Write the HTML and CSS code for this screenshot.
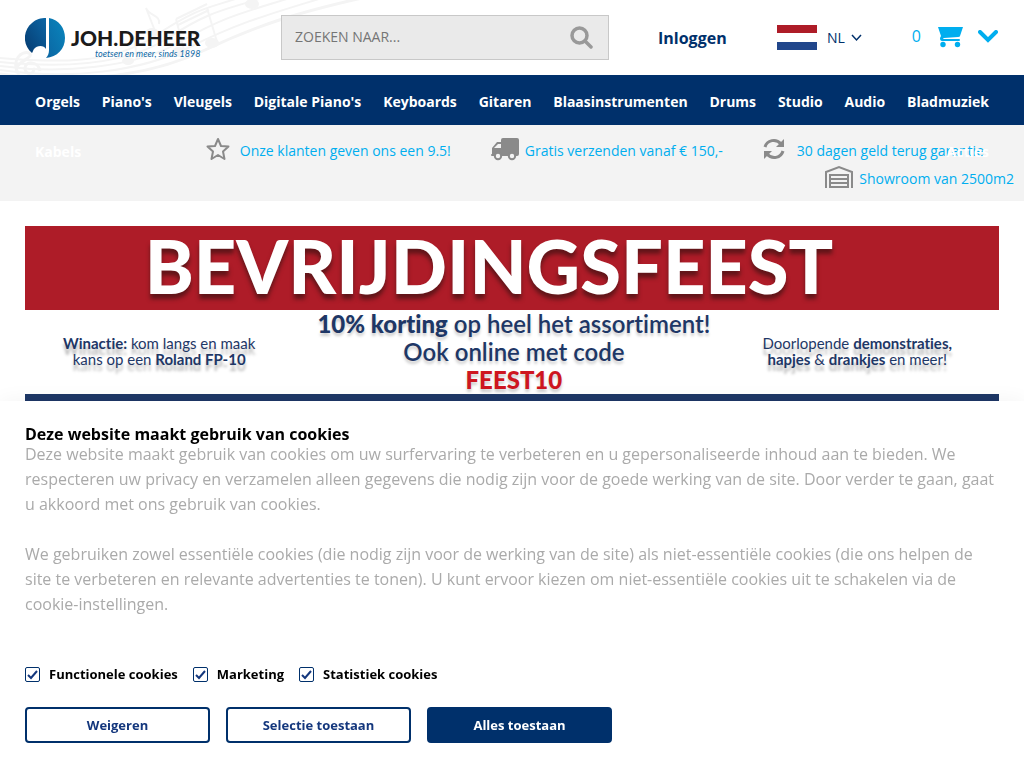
FILE: index.html
```html
<!DOCTYPE html>
<html lang="nl">
<head>
  <meta charset="UTF-8">
  <meta name="viewport" content="width=device-width, initial-scale=1.0">
  <title>Joh.deHeer - toetsen en meer, sinds 1898</title>
  <link rel="stylesheet" href="styles.css">
</head>
<body>
  <header class="header">
    <svg class="header-notes" width="380" height="75" viewBox="0 0 380 75" fill="none" stroke="#f4f4f4" stroke-width="2" aria-hidden="true">
      <path d="M0 58C50 62 110 66 155 36S210 8 238 -2"/>
      <path d="M0 62C60 68 125 66 168 38S225 10 262 -2"/>
      <path d="M0 66C60 74 135 68 180 42S245 12 290 -2"/>
      <path d="M0 70C70 80 140 72 190 47S270 14 322 -2"/>
      <path d="M0 74C80 84 150 76 205 50S300 12 362 -2" stroke-width="3"/>
      <path d="M19 75C10 60 22 50 29 53C36 58 12 62 17 73M40 71C38 60 24 61 25 69C26 76 36 74 33 68" stroke-width="3"/>
      <path d="M146 8L155 31M146 8C149 16 161 15 159 24M176 19L184 50M207 8L217 42M176 19L207 4M178 25L209 10M134 36L137 60" stroke-width="2"/>
      <g fill="#f4f4f4" stroke="none">
        <ellipse cx="152" cy="32" rx="6" ry="4"/>
        <ellipse cx="179" cy="52" rx="7" ry="5"/>
        <ellipse cx="212" cy="43" rx="7" ry="5"/>
        <ellipse cx="128" cy="61" rx="6" ry="4"/>
        <ellipse cx="252" cy="4" rx="7" ry="5"/>
      </g>
    </svg>

    <a class="logo" href="#">
      <svg width="40" height="40" viewBox="0 0 40 40" aria-hidden="true">
        <defs>
          <linearGradient id="logoLeft" x1="1" y1="0" x2="0" y2="1">
            <stop offset="0" stop-color="#0b66a5"/>
            <stop offset="1" stop-color="#063b70"/>
          </linearGradient>
          <linearGradient id="logoRight" x1="0" y1="1" x2="1" y2="0">
            <stop offset="0" stop-color="#0b65a2"/>
            <stop offset="1" stop-color="#0a86bd"/>
          </linearGradient>
        </defs>
        <path fill="url(#logoLeft)" d="M21 0V31C19 27 12 27 9 31C8 32 8 34 7 35C-3 27 -2 12 7 5C11 1 16 0 21 0Z"/>
        <path fill="url(#logoRight)" d="M24 0C34 2 40 10 40 20C40 31 32 39 21 40C23 38 24 35 24 32Z"/>
      </svg>
      <span class="logo-text">
        <span class="logo-name">JOH.DEHEER</span>
        <span class="logo-tagline">toetsen en meer, sinds 1898</span>
      </span>
    </a>

    <form class="search">
      <input class="search-input" type="text" placeholder="ZOEKEN NAAR..." aria-label="Zoeken naar">
      <button class="search-button" type="button" aria-label="Zoeken">
        <svg width="23" height="23" viewBox="0 0 23 23" fill="none" stroke="#999" aria-hidden="true">
          <circle cx="9.500" cy="9.500" r="7.500" stroke-width="3.500"/>
          <path d="M15 15L21 21" stroke-width="3.500" stroke-linecap="round"/>
        </svg>
      </button>
    </form>

    <a class="login" href="#">Inloggen</a>

    <button class="language" type="button">
      <svg width="40" height="25" viewBox="0 0 40 25" aria-hidden="true">
        <path fill="#fff" d="M0 0H40V25H0Z"/>
        <path fill="#ae1c28" d="M0 0H40V8H0Z"/>
        <path fill="#21468b" d="M0 17H40V25H0Z"/>
      </svg>
      <span class="language-name">NL</span>
      <svg width="11" height="8" viewBox="0 0 11 8" fill="none" stroke="#00306b" stroke-width="1.500" aria-hidden="true">
        <path d="M1 1L5.500 6L10 1"/>
      </svg>
    </button>

    <a class="cart" href="#">
      <span>0</span>
      <svg class="cart-icon" width="25" height="22" viewBox="0 0 25 22" aria-hidden="true">
        <path fill="#00aeef" d="M0 1H25L22 10Q22 11 20 11L6 12Q4 13 6 13H21Q22 13 22 14Q22 15 21 15H4Q2 15 2 12L3 10Z"/>
        <circle cx="5" cy="18.500" r="2.700" fill="#00aeef"/>
        <circle cx="19.500" cy="18.500" r="2.700" fill="#00aeef"/>
      </svg>
      <svg width="20" height="13" viewBox="0 0 20 13" fill="none" stroke="#00aeef" stroke-width="4" stroke-linecap="round" aria-hidden="true">
        <path d="M2 2L10 10L18 2"/>
      </svg>
    </a>
  </header>

  <nav class="nav">
    <ul class="nav-list">
      <li><a href="#">Orgels</a></li>
      <li><a href="#">Piano's</a></li>
      <li><a href="#">Vleugels</a></li>
      <li><a href="#">Digitale Piano's</a></li>
      <li><a href="#">Keyboards</a></li>
      <li><a href="#">Gitaren</a></li>
      <li><a href="#">Blaasinstrumenten</a></li>
      <li><a href="#">Drums</a></li>
      <li><a href="#">Studio</a></li>
      <li><a href="#">Audio</a></li>
      <li><a href="#">Bladmuziek</a></li>
      <li><a href="#">Kabels</a></li>
      <li><a href="#">Acties</a></li>
    </ul>
  </nav>

  <ul class="usp">
    <li>
      <svg width="24" height="24" viewBox="0 0 24 24" fill="none" stroke="#8a8a8a" stroke-width="2" stroke-linejoin="round" aria-hidden="true">
        <path d="M12 2L15 9L22.500 9.500L17 14.500L18.500 22L12 18L5.500 22L7 14.500L1.500 9.500L9 9Z"/>
      </svg>
      <a class="usp-wide" href="#">Onze klanten geven ons een 9.5!</a>
    </li>
    <li>
      <svg width="28" height="24" viewBox="0 0 28 24" aria-hidden="true">
        <path fill="#8a8a8a" d="M12 1H26Q28 1 28 3V17Q28 19 26 19H1Q0 19 0 18Q0 17 1 17V11L6 5H10V3Q10 1 12 1Z"/>
        <path fill="#f3f3f3" d="M7 7H10V11H3Z"/>
        <g fill="#f3f3f3" stroke="#8a8a8a" stroke-width="2">
          <circle cx="7" cy="19" r="3.200"/>
          <circle cx="21" cy="19" r="3.200"/>
        </g>
      </svg>
      <a href="#">Gratis verzenden vanaf € 150,-</a>
    </li>
    <li>
      <svg width="22" height="22" viewBox="0 0 22 22" fill="none" stroke="#8a8a8a" stroke-width="3" aria-hidden="true">
        <path d="M2 9C4 2 13 0 18 6M20 13C18 20 9 22 4 16"/>
        <path fill="#8a8a8a" stroke="none" d="M21 1V9H13ZM1 21V13H9Z"/>
      </svg>
      <a class="usp-wider" href="#">30 dagen geld terug garantie</a>
    </li>
    <li>
      <svg width="28" height="24" viewBox="0 0 28 24" fill="none" stroke="#8a8a8a" stroke-width="2" aria-hidden="true">
        <path d="M1 23V7L14 2L27 7V23"/>
        <path d="M5 22V10H23V22ZM5 14H23M5 18H23"/>
      </svg>
      <a href="#">Showroom van 2500m2</a>
    </li>
  </ul>

  <main class="content">
    <section class="banner">
      <h1 class="banner-title">BEVRIJDINGSFEEST</h1>
      <div class="banner-body">
        <p class="banner-side"><b>Winactie:</b> kom langs en maak<br>kans op een <b>Roland FP-10</b></p>
        <p class="banner-offer"><b>10% korting</b> op heel het assortiment!<br>Ook online met code<br><b class="banner-code">FEEST10</b></p>
        <p class="banner-side">Doorlopende <b>demonstraties,</b><br><b>hapjes</b> &amp; <b>drankjes</b> en meer!</p>
      </div>
    </section>
  </main>

  <form class="cookies">
    <h2>Deze website maakt gebruik van cookies</h2>
    <p>Deze website maakt gebruik van cookies om uw surfervaring te verbeteren en u gepersonaliseerde inhoud aan te bieden. We respecteren uw privacy en verzamelen alleen gegevens die nodig zijn voor de goede werking van de site. Door verder te gaan, gaat u akkoord met ons gebruik van cookies.</p>
    <p>We gebruiken zowel essentiële cookies (die nodig zijn voor de werking van de site) als niet-essentiële cookies (die ons helpen de site te verbeteren en relevante advertenties te tonen). U kunt ervoor kiezen om niet-essentiële cookies uit te schakelen via de cookie-instellingen.</p>
    <div class="cookie-options">
      <label><input type="checkbox" id="functional" checked> Functionele cookies</label>
      <label><input type="checkbox" id="marketing" checked> Marketing</label>
      <label><input type="checkbox" id="statistics" checked> Statistiek cookies</label>
    </div>
    <div class="cookie-buttons">
      <button type="button">Weigeren</button>
      <button type="button">Selectie toestaan</button>
      <button type="button" class="primary">Alles toestaan</button>
    </div>
  </form>
</body>
</html>
```
FILE: styles.css
```css
* {
  box-sizing: border-box;
}

body {
  margin: 0;
  font-family: "Open Sans", Arial, sans-serif;
  font-size: 14px;
  color: #000;
  background-color: #fff;
}

a {
  text-decoration: none;
}

button {
  font-family: inherit;
  cursor: pointer;
}

ul {
  list-style: none;
  margin: 0;
  padding: 0;
}

/* Header */
.header {
  position: relative;
  display: flex;
  align-items: center;
  height: 75px;
  padding: 0 25px;
}

.header-notes {
  position: absolute;
  top: 0;
  left: 0;
  z-index: -1;
}

.logo {
  display: flex;
  align-items: center;
  gap: 6px;
  width: 256px;
}

.logo-text {
  display: flex;
  flex-direction: column;
  align-items: flex-end;
  font-family: Lato, sans-serif;
  padding-top: 10px;
}

.logo-name {
  font-size: 21px;
  font-weight: 900;
  line-height: 22px;
  color: #1b1b1b;
}

.logo-tagline {
  font-size: 9px;
  font-style: italic;
  line-height: 10px;
  color: #0c68a5;
}

.search {
  display: flex;
  flex: 1;
  max-width: 328px;
  height: 45px;
  border: 1px solid #c8c8c8;
  background-color: #eaeaea;
}

.search-input {
  flex: 1;
  min-width: 0;
  padding: 0 13px 2px;
  border: none;
  background: none;
  font-family: inherit;
  font-size: 14px;
}

.search-input::placeholder {
  color: #757575;
}

.search-button {
  display: flex;
  align-items: center;
  padding: 0 15px;
  border: none;
  background: none;
}

.login {
  margin-left: 49px;
  font-size: 16px;
  font-weight: 700;
  color: #00306b;
}

.language {
  display: flex;
  align-items: center;
  margin-left: auto;
  padding: 0;
  border: none;
  background: none;
  font-size: 14px;
  color: #00306b;
}

.language-name {
  margin: 0 6px 0 10px;
}

.cart {
  display: flex;
  align-items: center;
  margin-left: 50px;
  padding: 0 1px 3px 0;
  font-size: 16px;
  color: #00aeef;
}

.cart-icon {
  margin: 2px 15px 0 17px;
}

/* Navigation */
.nav {
  position: relative;
  z-index: 1;
  height: 50px;
  padding: 0 25px;
  background-color: #00306b;
}

.nav-list {
  display: flex;
  flex-wrap: wrap;
  justify-content: space-between;
}

.nav-list a {
  display: block;
  padding: 0 10px;
  font-weight: 700;
  line-height: 54px;
  height: 50px;
  color: #fff;
}

/* Selling points */
.usp {
  display: flex;
  flex-wrap: wrap;
  justify-content: flex-end;
  column-gap: 10px;
  padding: 10px 10px 10px 20px;
  background-color: #f3f3f3;
}

.usp li {
  display: flex;
  align-items: center;
  height: 28px;
  padding-right: 30px;
}

.usp li:last-child {
  padding-right: 0;
}

.usp a {
  padding: 3px 0 0 6px;
  color: #00aeef;
}

.usp .usp-wide {
  padding-left: 10px;
}

.usp .usp-wider {
  padding-left: 12px;
}

/* Banner */
.content {
  padding: 25px;
}

.banner {
  border-bottom: 84px solid #1e3766;
  font-family: Lato, sans-serif;
  font-variant-ligatures: none;
  text-align: center;
}

.banner-title {
  margin: 0;
  padding: 0 46px 4px 0;
  background-color: #ae1c28;
  font-size: 74px;
  font-weight: 900;
  line-height: 80px;
  color: #fff;
  text-shadow: 0 5px 4px #601519;
}

.banner-body {
  display: flex;
  justify-content: space-between;
  height: 84px;
  padding: 0 47px 0 38px;
  color: #1e3766;
}

.banner-body p {
  margin: 0;
}

.banner-side {
  padding-top: 25px;
  font-size: 15px;
  line-height: 16px;
  text-shadow: 0 6px 3px #bbb;
}

.banner-body .banner-offer {
  margin-left: 10px;
  font-size: 24px;
  font-weight: 600;
  line-height: 28px;
  text-shadow: 0 3px 3px #ccc;
}

.banner-offer b {
  font-weight: 900;
}

.banner-offer .banner-code {
  color: #ce1620;
}

/* Cookie bar */
.cookies {
  position: fixed;
  right: 0;
  bottom: 0;
  left: 0;
  z-index: 2;
  padding: 26px 25px 25px;
  background-color: #fff;
  box-shadow: 0 0 20px rgba(0, 0, 0, 0.05);
}

.cookies h2 {
  margin: 0;
  font-size: 16px;
  font-weight: 700;
  line-height: 15px;
}

.cookies p {
  margin: 0 0 25px;
  font-size: 16px;
  line-height: 25px;
  color: #aaa;
}

.cookie-options {
  display: flex;
  gap: 15px;
  margin-top: 45px;
}

.cookie-options label {
  display: flex;
  align-items: center;
  gap: 9px;
  font-size: 13px;
  font-weight: 700;
  line-height: 25px;
}

.cookie-options input {
  appearance: none;
  width: 15px;
  height: 15px;
  margin: 0;
  border: 1px solid #00306b;
  border-radius: 2px;
}

.cookie-options input:checked {
  background: url("data:image/svg+xml,%3Csvg xmlns='http://www.w3.org/2000/svg' viewBox='0 0 13 13'%3E%3Cpath d='M2 7L5 10L11 3' fill='none' stroke='%2314377d' stroke-width='2'/%3E%3C/svg%3E") center no-repeat;
}

.cookie-buttons {
  display: flex;
  gap: 16px;
  margin-top: 20px;
}

.cookie-buttons button {
  width: 185px;
  height: 36px;
  border: 2px solid #00306b;
  border-radius: 4px;
  background-color: #fff;
  font-size: 13px;
  font-weight: 700;
  color: #14377d;
}

.cookie-buttons .primary {
  background-color: #00306b;
  color: #fff;
}
```
